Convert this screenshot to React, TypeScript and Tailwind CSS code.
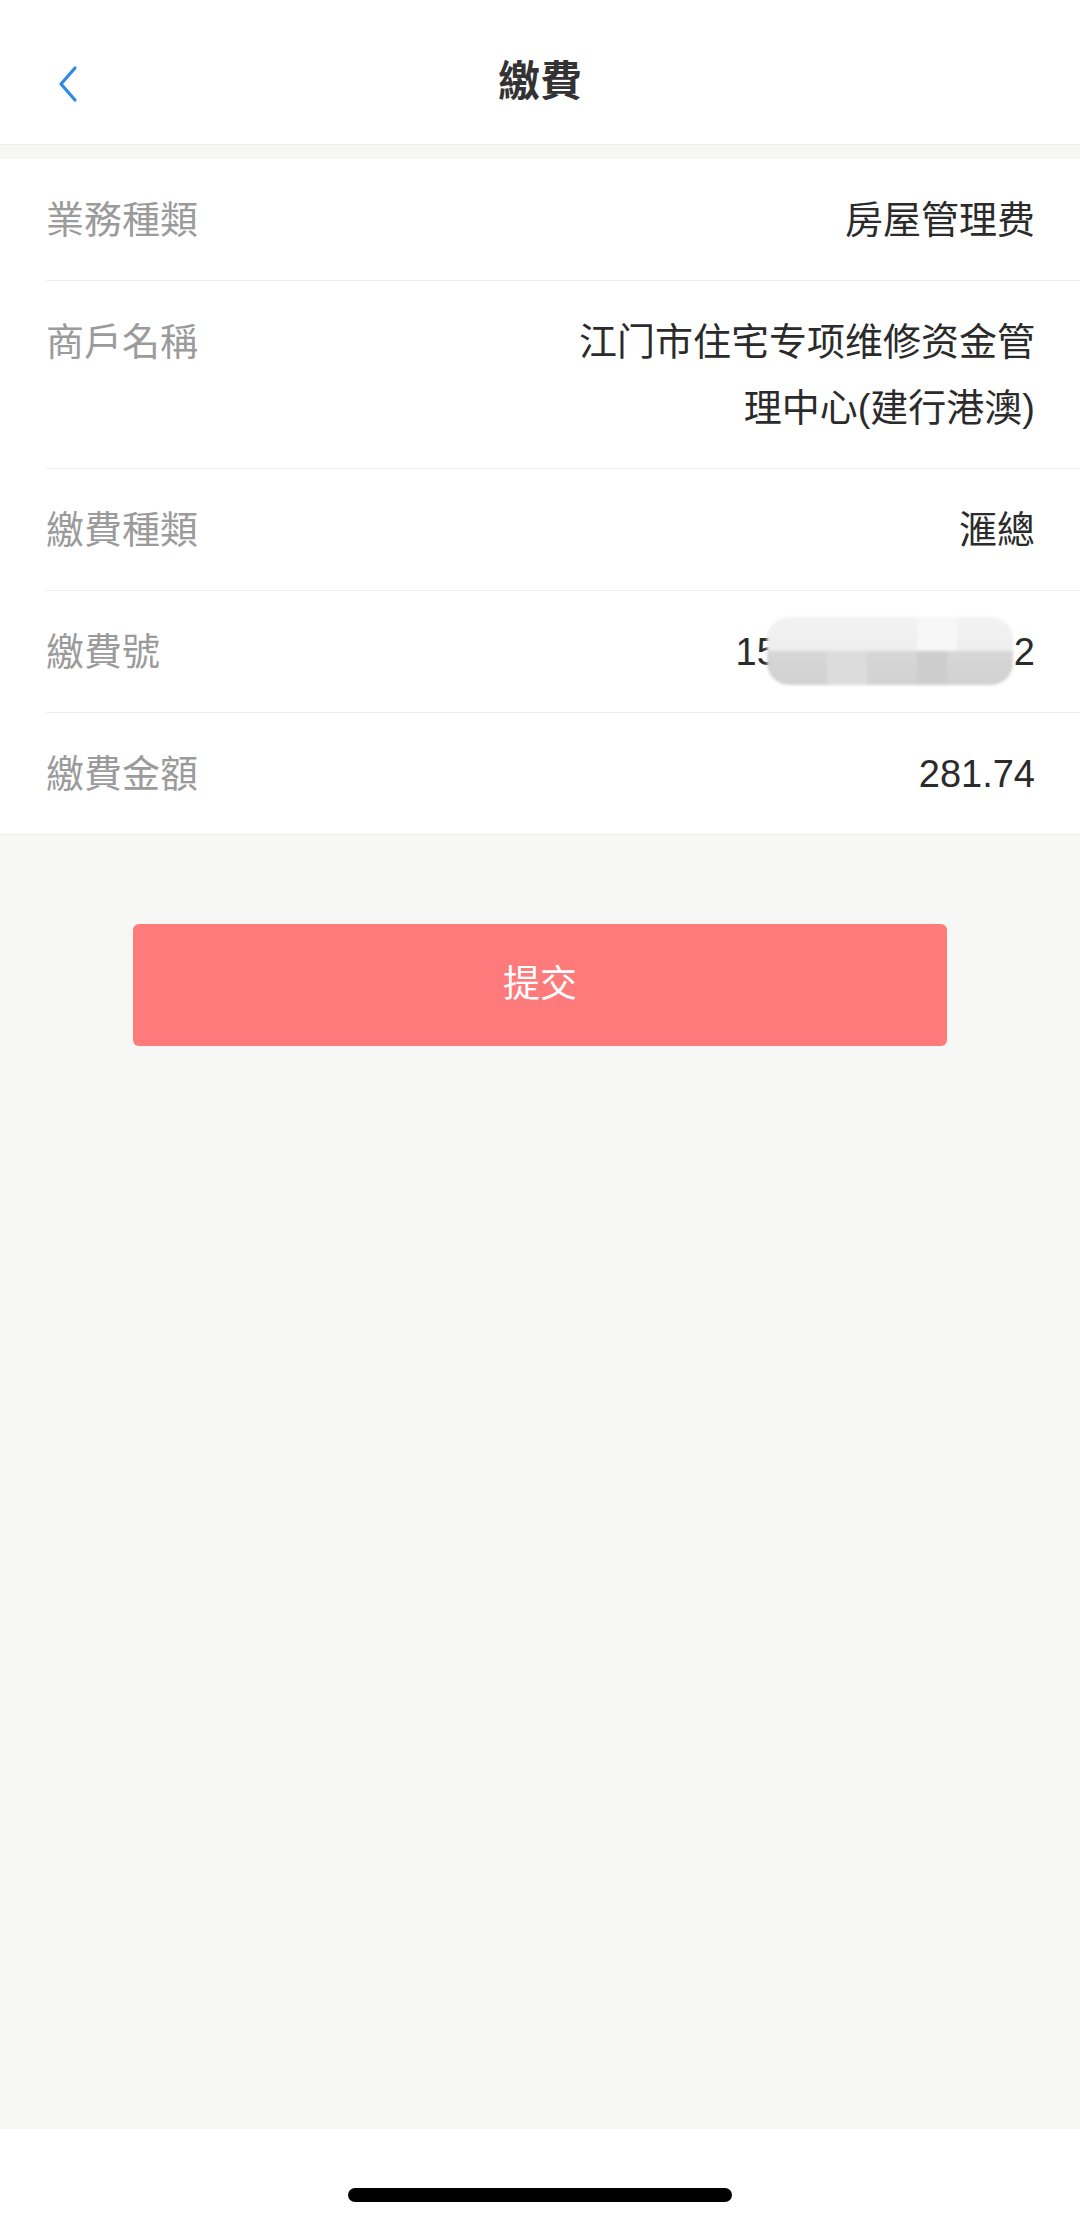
import React from "react";

const rows: { label: string; value: React.ReactNode }[] = [
  { label: "業務種類", value: "房屋管理费" },
  { label: "商戶名稱", value: "江门市住宅专项维修资金管理中心(建行港澳)" },
  { label: "繳費種類", value: "滙總" },
  { label: "繳費號", value: "masked" },
  { label: "繳費金額", value: "281.74" },
];

function MaskedNumber() {
  return (
    <span className="relative inline-block">
      15
      <span className="inline-block w-[236px]" />
      2
      {/* mosaic smear over the hidden digits */}
      <span className="pointer-events-none absolute left-[31px] top-[-2px] block h-[68px] w-[246px] overflow-hidden rounded-[22px] bg-[linear-gradient(180deg,#f2f2f2_0%,#eeeeee_49%,#d6d6d6_51%,#d1d1d1_100%)] blur-[1.5px]">
        <span className="absolute left-[60px] top-[34px] block h-[34px] w-[40px] bg-[#dcdcdc]" />
        <span className="absolute left-[150px] top-[34px] block h-[34px] w-[30px] bg-[#cdcdcd]" />
        <span className="absolute left-[150px] top-0 block h-[34px] w-[40px] bg-[#f7f7f7]" />
      </span>
    </span>
  );
}

export default function App() {
  return (
    <div className="flex min-h-[2226px] w-[1080px] flex-col bg-[#f7f7f6] font-['Liberation_Sans','Noto_Sans_CJK_TC',sans-serif]">
      {/* Nav bar */}
      <header className="grid h-[145px] grid-cols-[1fr_auto_1fr] items-center border-b border-[#ededed] bg-white pt-[20px]">
        <div className="pl-[57px] pt-[4px]">
          <svg width="22" height="38" viewBox="0 0 22 38" fill="none">
            <path d="M18 3 L4 19 L18 35" stroke="#2f8ae4" strokeWidth="3.2" strokeLinecap="round" strokeLinejoin="round" />
          </svg>
        </div>
        <h1 className="text-[42px] font-bold leading-none text-[#333333]">繳費</h1>
        <div />
      </header>

      <div className="h-[14px]" />

      {/* Details card */}
      <section className="border-b border-[#ececec] bg-white pl-[46px]">
        {rows.map((row, i) => (
          <div
            key={row.label}
            className={
              "flex items-start justify-between py-[27.5px] pr-[45px] text-[38px] leading-[66px] " +
              (i < rows.length - 1 ? "border-b border-[#efefef]" : "")
            }
          >
            <span className="shrink-0 text-[#9b9b9b]">{row.label}</span>
            <span className="w-[470px] text-right text-[#2b2b2b]">
              {row.value === "masked" ? <MaskedNumber /> : row.value}
            </span>
          </div>
        ))}
      </section>

      {/* Submit */}
      <div className="px-[133px] pt-[89px]">
        <button className="flex h-[122px] w-full items-center justify-center rounded-[6px] bg-[#ff7b7b] text-[37px] text-white">
          提交
        </button>
      </div>

      <div className="flex-1" />

      {/* Home indicator */}
      <div className="flex h-[97px] justify-center bg-white pt-[59px]">
        <div className="h-[14px] w-[384px] rounded-full bg-black" />
      </div>
    </div>
  );
}
